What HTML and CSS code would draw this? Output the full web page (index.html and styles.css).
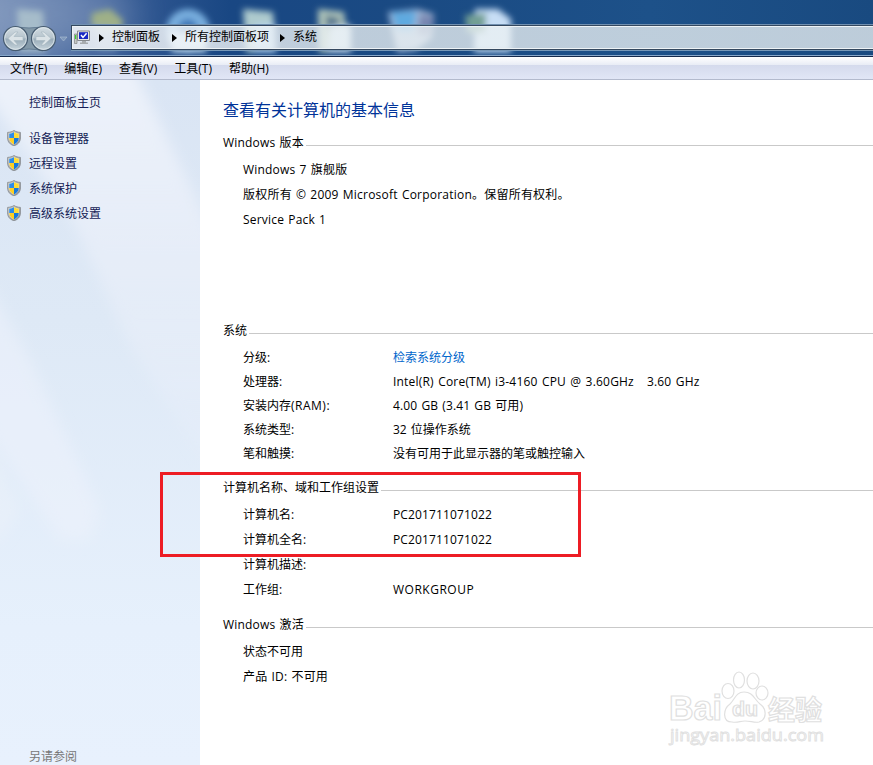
FILE: index.html
```html
<!DOCTYPE html>
<html lang="zh-CN">
<head>
    <meta charset="UTF-8">
    <meta name="viewport" content="width=device-width, initial-scale=1.0">
    <title>系统</title>
    <link rel="stylesheet" href="styles.css">
</head>
<body>

<svg width="0" height="0" class="defs">
    <defs>
        <clipPath id="shieldClip"><path d="M7 2 C5.6 3 4 3.6 2.2 3.7 V8 C2.2 11 4.2 13.2 7 14.4 C9.8 13.2 11.8 11 11.8 8 V3.7 C10 3.6 8.4 3 7 2Z"/></clipPath>
        <linearGradient id="shieldRim" x1="0" y1="0" x2="1" y2="1"><stop offset="0" stop-color="#d5d5d0"/><stop offset="1" stop-color="#8b8d91"/></linearGradient>
        <symbol id="shield" viewBox="0 0 14 16">
            <path d="M7 .5 C5.2 1.7 3 2.3 .6 2.4 V8 C.6 12 3.2 14.6 7 15.8 C10.8 14.6 13.4 12 13.4 8 V2.4 C11 2.3 8.8 1.7 7 .5Z" fill="url(#shieldRim)" stroke="#818589" stroke-width=".8"/>
            <path d="M7 2 C5.6 3 4 3.6 2.2 3.7 V8 C2.2 11 4.2 13.2 7 14.4 C9.8 13.2 11.8 11 11.8 8 V3.7 C10 3.6 8.4 3 7 2Z" fill="#fff"/>
            <g clip-path="url(#shieldClip)">
                <path d="M2 1H7V8H2Z" fill="#2d8ce8"/>
                <path d="M7 1H12V8H7Z" fill="#ffdc35"/>
                <path d="M2 8H7V15H2Z" fill="#ffcf22"/>
                <path d="M7 8H12V15H7Z" fill="#1679dd"/>
            </g>
        </symbol>
    </defs>
</svg>

<div class="window">
    <div class="titlebar">
        <!-- desktop icons seen through the glass -->
        <svg class="glass" width="873" height="55" viewBox="0 0 873 55">
            <defs>
                <filter id="soft" x="-20%" y="-20%" width="140%" height="140%"><feGaussianBlur stdDeviation="3"/></filter>
                <filter id="haze" x="-50%" y="-50%" width="200%" height="200%"><feGaussianBlur stdDeviation="18"/></filter>
            </defs>
            <ellipse cx="40" cy="14" rx="95" ry="40" fill="#a9b8d2" opacity=".4" filter="url(#haze)"/>
            <g filter="url(#soft)">
                <path d="M17 9L43 11L46 52H19Z" fill="#b5cbd0" opacity=".75"/>
                <path d="M92 13L110 9L123 20L121 31L104 35L91 25Z" fill="#9fb087"/>
                <path d="M93 24L122 28L116 51L98 50Z" fill="#8fa9c5" opacity=".6"/>
                <circle cx="188" cy="31" r="22" fill="#78aede"/>
                <circle cx="188" cy="29" r="10" fill="#3c77b8"/>
                <path d="M169 34L207 34L206 52H172Z" fill="#c5dff2"/>
                <path d="M243 9L273 12L276 52H246Z" fill="#aecbce"/>
                <path d="M255 25L275 24L276 52H254Z" fill="#b8d7f3"/>
                <path d="M318 9L344 12L345 24L351 25V52H319Z" fill="#b3c8bc"/>
                <path d="M325 15L340 18L338 31L327 29Z" fill="#55768d"/>
                <path d="M331 26H351V52H328Z" fill="#d2e3f2"/>
                <path d="M388 12L417 9L434 14L432 38L416 50L397 52Z" fill="#a4b8d6"/>
                <path d="M391 12L417 11L413 32L396 31Z" fill="#5eaae0"/>
                <path d="M420 14L434 16L430 37L417 34Z" fill="#7786b1"/>
                <path d="M475 9H498L511 19V52H474Z" fill="#c7def5"/>
                <path d="M465 15L486 13L485 33H467Z" fill="#729f94"/>
            </g>
        </svg>
        <div class="nav-buttons">
            <svg width="68" height="30" viewBox="0 0 68 30">
                <defs>
                    <linearGradient id="ball" x1="0" y1="0" x2="0" y2="1"><stop offset="0" stop-color="#d3dde3"/><stop offset=".48" stop-color="#b5c3cc"/><stop offset=".52" stop-color="#98abb8"/><stop offset="1" stop-color="#c9d6dd"/></linearGradient>
                </defs>
                <path d="M15 2Q29 4 43 2V26Q29 22 15 26Z" fill="#8298a8" stroke="#637c93" stroke-width="1"/>
                <circle cx="15.5" cy="13.5" r="12" fill="url(#ball)" stroke="#465b70" stroke-width="1.2"/>
                <circle cx="43.5" cy="13.5" r="12" fill="url(#ball)" stroke="#465b70" stroke-width="1.2"/>
                <circle cx="15.5" cy="13.5" r="10.8" fill="none" stroke="#e0e8ec" stroke-width=".8"/>
                <circle cx="43.5" cy="13.5" r="10.8" fill="none" stroke="#e0e8ec" stroke-width=".8"/>
                <path d="M8 13.5L15 7H18L14 11.5H23V15.5H14L18 20H15Z" fill="#dbe3e7" stroke="#a5b5bf" stroke-width=".6"/>
                <path d="M51 13.5L44 7H41L45 11.5H36V15.5H45L41 20H44Z" fill="#dbe3e7" stroke="#a5b5bf" stroke-width=".6"/>
                <path d="M60 12H67L63.5 16Z" fill="#7f99bb" stroke="#a8bad1" stroke-width=".7"/>
            </svg>
        </div>
        <div class="address">
            <svg class="pc" width="17" height="15" viewBox="0 0 17 15">
                <path d="M.5 4H3V13.5H.5Z" fill="#c5c9c6" stroke="#777" stroke-width=".6"/>
                <path d="M1 5H2.2V9H1Z" fill="#35d52e"/>
                <path d="M3.5 1H15.5V10.5H3.5Z" fill="#e6e7e4" stroke="#86898d"/>
                <path d="M5 2.2H14V9H5Z" fill="#1828c4"/>
                <path d="M7 5L9 7.4L12.6 3.2" fill="none" stroke="#fff" stroke-width="1.5"/>
                <path d="M8 11H12V12.4H14V14H6V12.4H8Z" fill="#a7abae"/>
            </svg>
            <span class="arrow"></span><span class="crumb crumb1">控制面板</span>
            <span class="arrow"></span><span class="crumb crumb2">所有控制面板项</span>
            <span class="arrow"></span><span class="crumb">系统</span>
        </div>
    </div>

    <div class="menubar">
        <span>文件(F)</span><span>编辑(E)</span><span>查看(V)</span><span>工具(T)</span><span>帮助(H)</span>
    </div>

    <div class="content">
        <div class="sidebar">
            <svg class="rays" width="200" height="685" viewBox="0 0 200 685">
                <defs>
                    <filter id="rayBlur" x="-30%" y="-30%" width="160%" height="160%"><feGaussianBlur stdDeviation="7"/></filter>
                    <linearGradient id="rayFade" gradientUnits="userSpaceOnUse" x1="0" y1="0" x2="0" y2="390"><stop offset="0" stop-color="#f1f5fc" stop-opacity=".8"/><stop offset=".6" stop-color="#ecf0fa" stop-opacity=".5"/><stop offset="1" stop-color="#eaeffa" stop-opacity=".2"/></linearGradient>
                </defs>
                <g filter="url(#rayBlur)">
                    <path d="M-30 -30H125L235 200V430L130 265L70 135L-30 -10Z" fill="url(#rayFade)"/>
                    <path d="M-20 190L30 280L100 430L90 460L60 460L-20 340Z" fill="#edf1fb" opacity=".6"/>
                    <path d="M-20 340L20 430L0 460H-20Z" fill="#edf2fb" opacity=".4"/>
                </g>
            </svg>
            <div class="side-home">控制面板主页</div>
            <ul class="tasks">
                <li><svg width="14" height="16"><use href="#shield"/></svg>设备管理器</li>
                <li><svg width="14" height="16"><use href="#shield"/></svg>远程设置</li>
                <li><svg width="14" height="16"><use href="#shield"/></svg>系统保护</li>
                <li><svg width="14" height="16"><use href="#shield"/></svg>高级系统设置</li>
            </ul>
            <div class="see-also">另请参阅</div>
        </div>

        <div class="main">
            <h1>查看有关计算机的基本信息</h1>

            <div class="section edition">
                <h2 class="wide">Windows 版本</h2>
                <p class="wide">Windows 7 旗舰版</p>
                <p class="wide copyright">版权所有 © 2009 Microsoft Corporation。保留所有权利。</p>
                <p class="wide">Service Pack 1</p>
            </div>

            <div class="section system">
                <h2>系统</h2>
                <dl>
                    <dt>分级:</dt><dd><a class="link">检索系统分级</a></dd>
                    <dt>处理器:</dt><dd class="cpu">Intel(R) Core(TM) i3-4160 CPU @ 3.60GHz &nbsp; 3.60 GHz</dd>
                    <dt>安装内存<span class="ram">(RAM):</span></dt><dd class="memory">4.00 GB (3.41 GB 可用)</dd>
                    <dt>系统类型:</dt><dd class="bits">32 位操作系统</dd>
                    <dt>笔和触摸:</dt><dd>没有可用于此显示器的笔或触控输入</dd>
                </dl>
            </div>

            <div class="section names">
                <h2>计算机名称、域和工作组设置</h2>
                <dl>
                    <dt>计算机名:</dt><dd class="pcname">PC201711071022</dd>
                    <dt>计算机全名:</dt><dd class="pcname">PC201711071022</dd>
                    <dt>计算机描述:</dt><dd></dd>
                    <dt>工作组:</dt><dd class="workgroup">WORKGROUP</dd>
                </dl>
            </div>

            <div class="section activation">
                <h2 class="wide">Windows 激活</h2>
                <p>状态不可用</p>
                <p class="wide">产品 ID: 不可用</p>
            </div>
        </div>
    </div>

    <div class="highlight"></div>

    <svg class="watermark" width="170" height="84" viewBox="0 0 170 84">
        <g fill="#fff" stroke="#e0e0e0" stroke-width="1.2">
            <ellipse cx="63" cy="25" rx="6" ry="7.5"/>
            <ellipse cx="74" cy="14" rx="5.5" ry="8"/>
            <ellipse cx="88" cy="15" rx="6" ry="8"/>
            <ellipse cx="97" cy="27" rx="6" ry="7"/>
            <path d="M79 26C71 26 70 33 65 38C58 43 57 56 67 56C73 57 75 55 80 55C86 55 89 57 94 56C103 53 101 42 95 38C89 33 88 26 79 26Z"/>
            <g class="wm-text">
                <text x="4" y="54" font-size="35" textLength="53" lengthAdjust="spacingAndGlyphs">Bai</text>
                <text x="67" y="50" font-size="20" textLength="26" lengthAdjust="spacingAndGlyphs">du</text>
                <text x="103" y="54" font-size="27" textLength="54" lengthAdjust="spacingAndGlyphs">经验</text>
                <text class="wm-url" x="5" y="75" font-size="17" textLength="154" lengthAdjust="spacingAndGlyphs">jingyan.baidu.com</text>
            </g>
        </g>
    </svg>
</div>

</body>
</html>
```

FILE: styles.css
```css
* {
    box-sizing: border-box;
}
body {
    margin: 0;
    font-family: "Open Sans", "Noto Sans CJK SC", sans-serif;
    font-size: 12px;
    color: #000;
    background: #fff;
}
h1, h2, p, dl, dd, ul {
    margin: 0;
    padding: 0;
    font-weight: normal;
}
.defs {
    position: absolute;
}
.window {
    position: relative;
    width: 873px;
    height: 765px;
    overflow: hidden;
}

/* title and address bar */
.titlebar {
    position: relative;
    display: flex;
    height: 57px;
    padding-top: 25px;
    background: linear-gradient(90deg, #6682ae 0, #3c5f98 90px, #194783 230px, #1a4a83 400px, #1d5189 650px, #194a80 100%);
    border-bottom: 1px solid #14294b;
    box-shadow: inset 0 -1px #87a7ca;
}
.glass {
    position: absolute;
    left: 0;
    top: 0;
}
.nav-buttons {
    position: relative;
    width: 71px;
    flex: none;
}
.address {
    position: relative;
    display: flex;
    align-items: center;
    flex: 1;
    height: 25px;
    padding-left: 2px;
    background: linear-gradient(90deg, rgba(246, 248, 251, 0.85), rgba(235, 241, 243, 0.78) 250px);
    border: solid #34485f;
    border-width: 1px 0 1px 1px;
    box-shadow: 0 -1px #7190b0, inset 1px 1px #edf2f5, inset 0 -1px #edf2f5, 0 1px #7798b7;
}
.arrow {
    border-left: 5px solid #000;
    border-top: 4px solid transparent;
    border-bottom: 4px solid transparent;
    margin-right: 8px;
}
.pc {
    margin-right: 8px;
}
.crumb {
    position: relative;
    top: -1px;
    line-height: 20px;
    white-space: nowrap;
}
.crumb1 {
    margin-right: 12px;
}
.crumb2 {
    margin-right: 11px;
}

.menubar {
    display: flex;
    gap: 17px;
    height: 23px;
    padding-left: 10px;
    line-height: 23px;
    background: linear-gradient(#fff 0, #e8ecf5 8px, #d4daec 8px, #e1e6f6 100%);
    border-bottom: 1px solid #b3bacd;
}

.content {
    display: flex;
    height: 685px;
}

/* left task pane */
.sidebar {
    position: relative;
    display: flex;
    flex-direction: column;
    width: 200px;
    flex: none;
    padding-top: 12px;
    color: #151c55;
    background: linear-gradient(#dae5f4 0, #dee9f6 35%, #e6f0fc 80%, #e8f1fd 100%);
}
.rays {
    position: absolute;
    left: 0;
    top: 0;
}
.side-home, .tasks, .see-also {
    position: relative;
}
.side-home {
    padding-left: 29px;
    line-height: 21px;
}
.tasks {
    list-style: none;
    padding: 12px 0 0 7px;
}
.tasks li {
    display: flex;
    align-items: center;
    gap: 8px;
    height: 25px;
}
.see-also {
    margin-top: auto;
    padding-left: 29px;
    line-height: 16px;
    color: #777;
}

/* information pane */
.main {
    flex: 1;
    padding: 18px 0 0 23px;
}
h1 {
    font-size: 16px;
    line-height: 25px;
    color: #003399;
}
h2 {
    display: flex;
    font-size: 12px;
    line-height: 20px;
    height: 20px;
    white-space: nowrap;
}
h2::after {
    content: "";
    flex: 1;
    height: 1px;
    margin: 12px 0 0 2px;
    background: #c9c9c9;
}
.section p {
    padding-left: 20px;
    line-height: 25px;
}
.section dl {
    display: grid;
    grid-template-columns: 150px 1fr;
    grid-auto-rows: 25px;
    line-height: 25px;
    padding-left: 20px;
}
.edition {
    margin-top: 10px;
    height: 188px;
}
.edition h2 {
    margin-bottom: 4px;
}
.system {
    height: 157px;
}
.system h2 {
    margin-bottom: 5px;
}
.system dl {
    grid-auto-rows: 24px;
    line-height: 24px;
}
.names {
    height: 137px;
}
.names h2, .activation h2 {
    margin-bottom: 4px;
}
.link {
    color: #0066cc;
}

/* spacing of the latin text */
.wide {
    letter-spacing: 0.2px;
    word-spacing: 0.8px;
}
.copyright {
    letter-spacing: 0.22px;
}
.cpu {
    letter-spacing: 0.2px;
    word-spacing: 1px;
}
.ram {
    letter-spacing: 0.5px;
}
.memory {
    letter-spacing: 0.15px;
    word-spacing: 0.8px;
}
.bits {
    word-spacing: 1px;
}
.pcname {
    letter-spacing: 0.14px;
}
.workgroup {
    letter-spacing: 0.5px;
}

.highlight {
    position: absolute;
    left: 160px;
    top: 472px;
    width: 421px;
    height: 85px;
    border: 3px solid #ed1c24;
}
.watermark {
    position: absolute;
    left: 665px;
    top: 666px;
}
.wm-text {
    font-family: "Liberation Sans", "Noto Sans CJK SC", sans-serif;
    font-weight: bold;
}
.wm-url {
    font-family: "Open Sans", sans-serif;
    font-weight: normal;
    stroke-width: 0.9;
}
```
